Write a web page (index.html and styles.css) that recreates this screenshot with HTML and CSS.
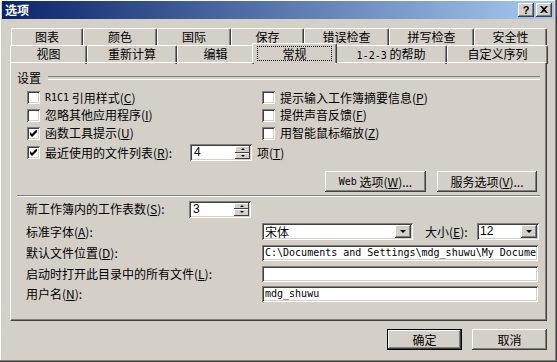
FILE: index.html
```html
<!DOCTYPE html>
<html lang="zh-CN">
<head>
    <meta charset="UTF-8">
    <title>选项</title>
    <link rel="stylesheet" href="styles.css">
</head>
<body>
<div class="window">
    <!-- barra de título -->
    <div class="titlebar">
        <span class="title">选项</span>
        <div class="caption-buttons">
            <span class="cap-btn help">?</span>
            <span class="cap-btn close">
                <svg width="8" height="7" viewBox="0 0 8 7"><path d="M0 0h2l2 2 2-2h2L5 3.5 8 7H6L4 5 2 7H0l3-3.5z"/></svg>
            </span>
        </div>
    </div>

    <div class="dialog-body">
        <!-- pestañas en dos filas -->
        <div class="tabs">
            <div class="tab-row back">
                <div class="tab">图表</div>
                <div class="tab">颜色</div>
                <div class="tab">国际</div>
                <div class="tab">保存</div>
                <div class="tab">错误检查</div>
                <div class="tab">拼写检查</div>
                <div class="tab">安全性</div>
            </div>
            <div class="tab-row front">
                <div class="tab">视图</div>
                <div class="tab">重新计算</div>
                <div class="tab">编辑</div>
                <div class="tab active"><span class="focus">常规</span></div>
                <div class="tab"><span class="lat">1-2-3</span> 的帮助</div>
                <div class="tab">自定义序列</div>
            </div>
        </div>

        <div class="panel">
            <div class="group-title">设置</div>

            <div class="options">
                <div class="check"><span class="box"></span><span class="lat">R1C1</span>&nbsp;引用样式(<u>C</u>)</div>
                <div class="check"><span class="box"></span>提示输入工作簿摘要信息(<u>P</u>)</div>
                <div class="check"><span class="box"></span>忽略其他应用程序(<u>I</u>)</div>
                <div class="check"><span class="box"></span>提供声音反馈(<u>F</u>)</div>
                <div class="check"><span class="box checked"><svg width="7" height="7" viewBox="0 0 7 7"><path d="M0 2l2 2 5-5v3L2 7 0 5z"/></svg></span>函数工具提示(<u>U</u>)</div>
                <div class="check"><span class="box"></span>用智能鼠标缩放(<u>Z</u>)</div>
                <div class="check recent">
                    <span class="box checked"><svg width="7" height="7" viewBox="0 0 7 7"><path d="M0 2l2 2 5-5v3L2 7 0 5z"/></svg></span>
                    <span class="recent-label">最近使用的文件列表(<u>R</u>):</span>
                    <div class="spin"><span class="spin-val">4</span><span class="spin-btns"><span class="up"></span><span class="down"></span></span></div>
                    <span class="unit">项(<u>T</u>)</span>
                </div>
            </div>

            <div class="web-buttons">
                <div class="btn web"><span class="lat">Web</span>&nbsp;选项(<u>W</u>)...</div>
                <div class="btn service">服务选项(<u>V</u>)...</div>
            </div>

            <div class="separator"></div>

            <div class="fields">
                <div class="field-row">
                    <span class="field-label short">新工作簿内的工作表数(<u>S</u>):</span>
                    <div class="spin"><span class="spin-val">3</span><span class="spin-btns"><span class="up"></span><span class="down"></span></span></div>
                </div>
                <div class="field-row font-row">
                    <span class="field-label">标准字体(<u>A</u>):</span>
                    <div class="combo font-combo"><span class="combo-val">宋体</span><span class="combo-btn"></span></div>
                    <span class="size-label">大小(<u>E</u>):</span>
                    <div class="combo size-combo"><span class="combo-val num">12</span><span class="combo-btn"></span></div>
                </div>
                <div class="field-row path-row">
                    <span class="field-label">默认文件位置(<u>D</u>):</span>
                    <div class="textbox mono">C:\Documents and Settings\mdg_shuwu\My Docume</div>
                </div>
                <div class="field-row open-row">
                    <span class="field-label">启动时打开此目录中的所有文件(<u>L</u>):</span>
                    <div class="textbox"></div>
                </div>
                <div class="field-row user-row">
                    <span class="field-label">用户名(<u>N</u>):</span>
                    <div class="textbox mono">mdg_shuwu</div>
                </div>
            </div>
        </div>

        <div class="dialog-buttons">
            <div class="btn default">确定</div>
            <div class="btn">取消</div>
        </div>
    </div>
</div>
</body>
</html>
```

FILE: styles.css
```css
* {
    box-sizing: border-box;
}

html, body {
    margin: 0;
    padding: 0;
}

body {
    width: 557px;
    height: 362px;
    overflow: hidden;
    background: #d4d0c8;
    font-family: "Noto Sans CJK SC", "Liberation Sans", sans-serif;
    font-size: 12px;
    line-height: 14px;
    color: #000;
}

u {
    text-decoration: underline;
    text-underline-offset: 1px;
}

.lat {
    font-family: "DejaVu Sans Mono", monospace;
    font-size: 10px;
}

/* marco de la ventana */
.window {
    width: 557px;
    height: 362px;
    background: #d4d0c8;
    border-right: 1px solid #404040;
    border-bottom: 1px solid #404040;
    box-shadow: inset -1px -1px #808080, inset 1px 1px #fff;
    padding: 1px 2px 2px 2px;
    display: flex;
    flex-direction: column;
}

.titlebar {
    height: 18px;
    background: linear-gradient(to right, #0a246a, #a6caf0);
    display: flex;
    align-items: center;
    justify-content: space-between;
    padding: 0 2px 0 3px;
}

.title {
    color: #fff;
    font-weight: bold;
}

.caption-buttons {
    display: flex;
    gap: 2px;
}

.cap-btn {
    width: 16px;
    height: 14px;
    background: #d4d0c8;
    box-shadow: inset -1px -1px #404040, inset 1px 1px #fff, inset -2px -2px #808080;
    display: flex;
    align-items: center;
    justify-content: center;
    font: bold 11px "Liberation Sans", sans-serif;
    padding-bottom: 1px;
}

.dialog-body {
    flex: 1;
    padding: 9px 7px 0 8px;
    display: flex;
    flex-direction: column;
}

/* pestañas */
.tab-row {
    display: grid;
    height: 17px;
}

.tab-row.back {
    margin-left: 1px;
    grid-template-columns: 72px 74px 74px 73px 85px 85px 73px;
}

.tab-row.front {
    grid-template-columns: 77px 90px 77px 81px 112px 101px;
}

.tab {
    background: #d4d0c8;
    border-top: 1px solid #fff;
    border-left: 1px solid #fff;
    border-right: 1px solid #404040;
    box-shadow: inset -1px 0 #808080;
    border-radius: 2px 2px 0 0;
    text-align: center;
    line-height: 16px;
    white-space: nowrap;
}

.tab.active {
    position: relative;
    z-index: 1;
    margin: -2px -2px -1px -2px;
    height: 20px;
    padding: 2px 2px 0 2px;
}

.focus {
    display: block;
    height: 15px;
    margin: 0 2px;
    border: 1px dotted #000;
    line-height: 13px;
}

/* panel principal */
.panel {
    height: 259px;
    border: 1px solid;
    border-color: #fff #404040 #404040 #fff;
    box-shadow: inset -1px -1px #808080;
    padding: 8px 6px 0 6px;
}

.group-title {
    display: flex;
    align-items: center;
    gap: 7px;
    height: 14px;
}

.group-title::after {
    content: "";
    flex: 1;
    height: 2px;
    border-top: 1px solid #808080;
    border-bottom: 1px solid #fff;
}

.options {
    display: grid;
    grid-template-columns: 235px 1fr;
    grid-template-rows: 17px 18px 18px 21px;
    margin-top: 4px;
    padding-left: 10px;
}

.check {
    display: flex;
    align-items: center;
    white-space: nowrap;
}

.check > * {
    flex: none;
}

.check.recent {
    grid-column: 1 / 3;
}

.box {
    width: 13px;
    height: 13px;
    margin-right: 5px;
    background: #fff;
    box-shadow: inset 1px 1px #808080, inset -1px -1px #fff, inset 2px 2px #404040, inset -2px -2px #d4d0c8;
    display: flex;
    align-items: center;
    justify-content: center;
}

.recent-label {
    width: 145px;
}

.unit {
    margin-left: 5px;
}

/* controles comunes */
.spin {
    width: 62px;
    height: 17px;
    flex: none;
    display: flex;
    background: #fff;
    padding: 2px;
    box-shadow: inset 1px 1px #808080, inset -1px -1px #fff, inset 2px 2px #404040, inset -2px -2px #d4d0c8;
}

.spin-val {
    flex: 1;
    padding-left: 2px;
    font-family: "Liberation Sans", sans-serif;
    line-height: 13px;
}

.spin-btns {
    width: 15px;
    display: flex;
    flex-direction: column;
}

.spin-btns span {
    flex: 1;
    background: #d4d0c8;
    box-shadow: inset -1px -1px #404040, inset 1px 1px #fff;
    display: flex;
    align-items: center;
    justify-content: center;
}

.spin-btns .up::after {
    content: "";
    border-left: 2px solid transparent;
    border-right: 2px solid transparent;
    border-bottom: 2px solid #000;
}

.spin-btns .down::after {
    content: "";
    border-left: 2px solid transparent;
    border-right: 2px solid transparent;
    border-top: 2px solid #000;
}

.btn {
    height: 21px;
    background: #d4d0c8;
    box-shadow: inset -1px -1px #404040, inset 1px 1px #fff, inset -2px -2px #808080;
    display: flex;
    align-items: center;
    justify-content: center;
    white-space: nowrap;
}

.btn.default {
    border: 1px solid #000;
}

.web-buttons {
    display: flex;
    justify-content: flex-end;
    gap: 11px;
    margin-top: 8px;
    padding-right: 3px;
}

.btn.web {
    width: 101px;
}

.btn.service {
    width: 100px;
}

.separator {
    height: 2px;
    margin-top: 3px;
    border-top: 1px solid #808080;
    border-bottom: 1px solid #fff;
}

/* filas inferiores */
.fields {
    padding-left: 9px;
    margin-top: 1px;
}

.field-row {
    display: flex;
    align-items: center;
    height: 20px;
    white-space: nowrap;
}

.field-row > * {
    flex: none;
}

.field-row:first-child {
    height: 22px;
}

.font-row {
    height: 23px;
}

.open-row {
    height: 21px;
}

.field-label {
    width: 236px;
}

.field-label.short {
    width: 163px;
}

.combo {
    height: 17px;
    display: flex;
    background: #fff;
    padding: 2px;
    box-shadow: inset 1px 1px #808080, inset -1px -1px #fff, inset 2px 2px #404040, inset -2px -2px #d4d0c8;
}

.font-combo {
    width: 151px;
}

.size-combo {
    width: 62px;
}

.combo-val {
    flex: 1;
    padding-left: 1px;
    line-height: 13px;
}

.combo-val.num {
    font-family: "Liberation Sans", sans-serif;
}

.combo-btn {
    width: 16px;
    background: #d4d0c8;
    box-shadow: inset -1px -1px #404040, inset 1px 1px #fff, inset -2px -2px #808080;
    display: flex;
    align-items: center;
    justify-content: center;
}

.combo-btn::after {
    content: "";
    border-left: 3px solid transparent;
    border-right: 3px solid transparent;
    border-top: 3px solid #000;
}

.size-label {
    width: 52px;
    margin-left: 12px;
}

.textbox {
    width: 276px;
    height: 16px;
    background: #fff;
    padding: 2px 3px;
    box-shadow: inset 1px 1px #808080, inset -1px -1px #fff, inset 2px 2px #404040, inset -2px -2px #d4d0c8;
    line-height: 12px;
    overflow: hidden;
}

.textbox.mono {
    font-family: "DejaVu Sans Mono", monospace;
    font-size: 10px;
}

.dialog-buttons {
    display: flex;
    justify-content: flex-end;
    gap: 10px;
    margin-top: 8px;
}

.dialog-buttons .btn {
    width: 75px;
}
```
